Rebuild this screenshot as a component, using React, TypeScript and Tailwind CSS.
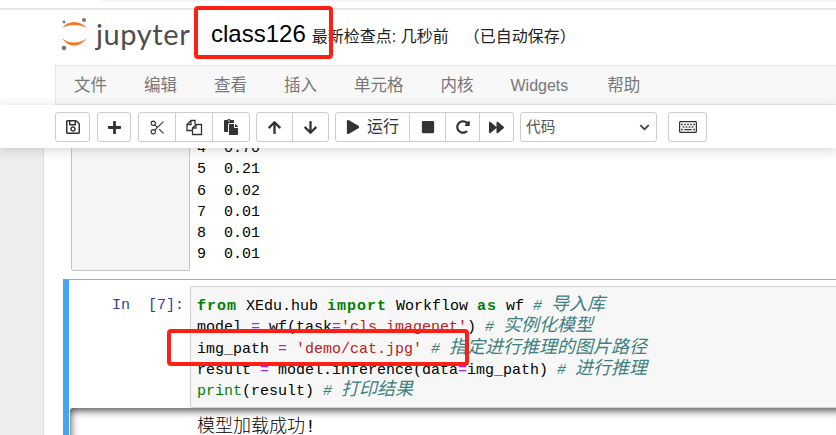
import React from 'react';
import { Scissors } from 'lucide-react';
import {
  FaRegSave,
  FaPlus,
  FaPaste,
  FaArrowUp,
  FaArrowDown,
  FaPlay,
  FaStop,
  FaRedoAlt,
  FaForward,
  FaRegKeyboard,
  FaChevronDown,
} from 'react-icons/fa';

const MENU = ['文件', '编辑', '查看', '插入', '单元格', '内核', 'Widgets', '帮助'];
const OLD_OUTPUT = ['4  0.70', '5  0.21', '6  0.02', '7  0.01', '8  0.01', '9  0.01'];

const Keyword = ({ children }: { children: React.ReactNode }) => (
  <span className="font-bold tracking-[1px] text-[#008000]">{children}</span>
);
const Op = ({ children }: { children: React.ReactNode }) => <span className="text-[#aa22ff]">{children}</span>;
const Str = ({ children }: { children: React.ReactNode }) => <span className="text-[#ba2121]">{children}</span>;
const Comment = ({ children }: { children: React.ReactNode }) => (
  <span className="italic text-[#408080]">
    # <span className="text-[18px] leading-none">{children}</span>
  </span>
);

const Logo = () => (
  <div className="flex items-center w-[134px] h-[40px]">
    <svg width="30" height="36" viewBox="0 0 30 36" className="mr-[6px] shrink-0">
      <path d="M2 12 C8 4 20 4 27 12 C20 8 8 8 2 12 Z" fill="#f37726" />
      <path d="M2 22 C8 32 20 32 27 22 C20 28 8 28 2 22 Z" fill="#f37726" />
      <circle cx="24" cy="4" r="2" fill="#767677" />
      <circle cx="4" cy="6" r="1.4" fill="#767677" />
      <circle cx="4" cy="32" r="2.3" fill="#767677" />
    </svg>
    <span className="font-['Lato','Open_Sans',sans-serif] text-[29px] leading-none tracking-[0.6px] text-[#4e4e4e]">
      jupyter
    </span>
  </div>
);

const CopyIcon = () => (
  <svg width="17" height="17" viewBox="0 0 17 17" fill="none" stroke="#333" strokeWidth="1.3">
    <path d="M6 11.5H1V5.5L5 1.5H9V5" />
    <path d="M5 1.5V5.5H1" />
    <path d="M6.5 15.5V9L10 5.5H15.5V15.5Z" />
    <path d="M10 5.5V9H6.5" />
  </svg>
);

const Btn = ({ className, children }: { className: string; children: React.ReactNode }) => (
  <div className={`flex items-center justify-center h-full text-[#333] ${className}`}>{children}</div>
);

const Toolbar = () => (
  <div className="relative z-10 h-[43px] bg-white pl-[55px] pt-[7px] shadow-[0_2px_10px_rgba(87,87,87,0.25)]">
    <div className="flex h-[30px] items-stretch">
      <div className="w-[35px] mr-[7px] border border-[#ccc] rounded-[3px]">
        <Btn className="w-full"><FaRegSave size={16} /></Btn>
      </div>
      <div className="w-[34px] mr-[7px] border border-[#ccc] rounded-[3px]">
        <Btn className="w-full"><FaPlus size={15} /></Btn>
      </div>
      <div className="flex w-[112px] mr-[6px] border border-[#ccc] rounded-[3px] divide-x divide-[#ccc]">
        <Btn className="flex-1"><Scissors size={17} strokeWidth={1.5} /></Btn>
        <Btn className="flex-1"><CopyIcon /></Btn>
        <Btn className="flex-1"><FaPaste size={16} /></Btn>
      </div>
      <div className="flex w-[73px] mr-[6px] border border-[#ccc] rounded-[3px] divide-x divide-[#ccc]">
        <Btn className="flex-1"><FaArrowUp size={15} /></Btn>
        <Btn className="flex-1"><FaArrowDown size={15} /></Btn>
      </div>
      <div className="flex w-[179px] mr-[6px] border border-[#ccc] rounded-[3px] divide-x divide-[#ccc]">
        <Btn className="w-[74px] gap-[7px]">
          <FaPlay size={14} />
          <span className="text-[16px]">运行</span>
        </Btn>
        <Btn className="w-[36px]"><FaStop size={14} /></Btn>
        <Btn className="w-[34px]"><FaRedoAlt size={14} /></Btn>
        <Btn className="flex-1"><FaForward size={15} /></Btn>
      </div>
      <div className="flex items-center justify-between w-[137px] mr-[11px] px-[5px] border border-[#ccc] rounded-[3px] text-[14.7px] text-[#555]">
        <span>代码</span>
        <FaChevronDown size={11} className="mr-[1px] text-[#444]" />
      </div>
      <div className="flex items-center justify-center w-[39px] border border-[#ccc] rounded-[3px] text-[#333]">
        <FaRegKeyboard size={18} />
      </div>
    </div>
  </div>
);

export default function App() {
  return (
    <div className="relative w-full h-[435px] overflow-hidden bg-white font-['Liberation_Sans','Noto_Sans_CJK_SC',sans-serif]">
      <div className="h-[10px] bg-white border-b-2 border-[#e5e5e5]">
        <div className="ml-[100px] h-px bg-[#eef3fb]" />
      </div>

      <div className="flex items-center h-[55px] pl-[60px] pb-[8px] text-black">
        <Logo />
        <span className="ml-[17px] text-[24px] leading-none">class126</span>
        <span className="ml-[6px] mt-[6px] text-[16px] leading-none whitespace-pre text-[#222]">最新检查点: 几秒前</span>
        <span className="ml-[15px] mt-[6px] text-[16px] leading-none whitespace-pre text-[#222]">（已自动保存）</span>
      </div>

      <div className="flex items-center gap-[37px] ml-[55px] h-[40px] pl-[18px] pt-px bg-[#f8f8f8] border border-r-0 border-[#e7e7e7] text-[16.5px] text-[#777]">
        {MENU.map((item) => (
          <span key={item} className={item === 'Widgets' ? 'text-[16px] mr-[2px]' : ''}>
            {item}
          </span>
        ))}
      </div>

      <Toolbar />

      <div className="flex h-[287px] overflow-hidden font-['Liberation_Mono','Noto_Sans_CJK_SC',monospace] text-[15px] leading-[21.25px] text-black">
        <div className="w-[44px] shrink-0 bg-[#eee] border-r border-[#ddd]" />
        <div className="flex-1 min-w-0 pl-[19px]">
          <div className="flex h-[131px] pl-[8px]">
            <div className="w-[119px] h-[124px] -mt-px bg-[#f5f5f5] border border-[#c4c4c4] rounded-[2px]" />
            <pre className="pl-[7px] -mt-[10px] font-['Liberation_Mono','Noto_Sans_CJK_SC',monospace]">
              {OLD_OUTPUT.join('\n')}
            </pre>
          </div>

          <div className="border-t border-[#ababab] border-l-[6px] border-l-[#42a5f5] h-[160px]">
            <div className="flex pt-[6px]">
              <div className="w-[121px] pt-[9px] pr-[6px] text-right text-[#303f9f] whitespace-pre">In  [7]:</div>
              <pre className="flex-1 -mr-[4px] h-[122px] pt-[9px] pl-[6px] bg-[#f7f7f7] border border-[#cfcfcf] rounded-[2px] font-['Liberation_Mono','Noto_Sans_CJK_SC',monospace]">
                <Keyword>from</Keyword> XEdu.hub <Keyword>import</Keyword> Workflow <Keyword>as</Keyword> wf <Comment>导入库</Comment>
                {'\n'}model <Op>=</Op> wf(task<Op>=</Op><Str>'cls_imagenet'</Str>) <Comment>实例化模型</Comment>
                {'\n'}img_path <Op>=</Op> <Str>'demo/cat.jpg'</Str> <Comment>指定进行推理的图片路径</Comment>
                {'\n'}result <Op>=</Op> model.inference(data<Op>=</Op>img_path) <Comment>进行推理</Comment>
                {'\n'}<span className="text-[#008000]">print</span>(result) <Comment>打印结果</Comment>
              </pre>
            </div>
            <div className="h-[40px] ml-px -mr-[8px] pl-[127px] pt-[11px] rounded-[3px] shadow-[inset_0_2px_8px_rgba(0,0,0,0.8)] text-[18px] leading-[16px] font-light">
              模型加载成功!
            </div>
          </div>
        </div>
      </div>

      <div className="absolute left-[194px] top-[6px] w-[139px] h-[53px] border-4 border-[#ff2015] rounded-[4px]" />
      <div className="absolute left-[167px] top-[329px] w-[302px] h-[37px] border-4 border-[#ff2015] rounded-[4px]" />
    </div>
  );
}
